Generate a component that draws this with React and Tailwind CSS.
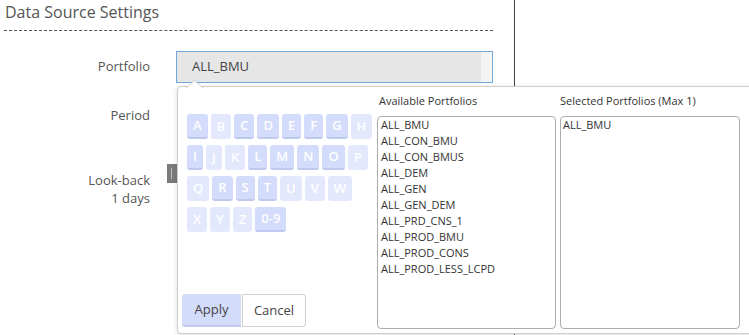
import React from "react";

const rows = [
  [["A", 1], ["B", 0], ["C", 1], ["D", 1], ["E", 1], ["F", 1], ["G", 1], ["H", 0]],
  [["I", 1], ["J", 0], ["K", 0], ["L", 1], ["M", 1], ["N", 1], ["O", 1], ["P", 0]],
  [["Q", 0], ["R", 1], ["S", 1], ["T", 1], ["U", 0], ["V", 0], ["W", 0]],
  [["X", 0], ["Y", 0], ["Z", 0], ["0-9", 1]],
];

const items = [
  "ALL_BMU",
  "ALL_CON_BMU",
  "ALL_CON_BMUS",
  "ALL_DEM",
  "ALL_GEN",
  "ALL_GEN_DEM",
  "ALL_PRD_CNS_1",
  "ALL_PROD_BMU",
  "ALL_PROD_CONS",
  "ALL_PROD_LESS_LCPD",
];

function Letter({ label, active }) {
  return (
    <div
      className={
        active
          ? "h-[25px] px-[6px] flex items-center justify-center rounded-[3px] bg-[#d4dcfb] border-b-2 border-[#bfc9f0] text-white text-[13px] font-semibold"
          : "h-[25px] px-[6px] flex items-center justify-center rounded-[3px] bg-[#e3e8fd] text-white text-[13px] font-semibold"
      }
    >
      {label}
    </div>
  );
}

export default function App() {
  return (
    <div
      className="relative w-[749px] h-[335px] overflow-hidden bg-white flex text-[#555]"
      style={{ fontFamily: '"Open Sans", "Liberation Sans", sans-serif' }}
    >
      <div className="w-[515px] h-full border-r border-[#444] shrink-0">
        <div className="pl-[5px] pt-[1px] text-[16px] leading-[22px] text-[#555]">
          Data Source Settings
        </div>
        <div className="ml-[4px] w-[489px] mt-[7px] border-t border-dashed border-[#555]" />
        <div className="mt-[20px] flex items-center h-[32px]">
          <div className="w-[150px] text-right text-[13px]">Portfolio</div>
          <div className="ml-[26px] w-[317px] h-[32px] border border-[#6fa8dc] bg-[#e6e6e6] flex">
            <div className="flex-1 pl-[15px] flex items-center text-[13px] text-[#444]">ALL_BMU</div>
            <div className="w-[11px] bg-[#f4f4f4]" />
          </div>
        </div>
        <div className="mt-[23px] flex h-[18px] items-center">
          <div className="w-[150px] text-right text-[13px] leading-[18px]">Period</div>
        </div>
        <div className="mt-[47px] flex items-start">
          <div className="w-[150px] text-right text-[13px] leading-[18px]">
            Look-back
            <br />1 days
          </div>
          <div className="ml-[17px] -mt-[7px] w-[10px] h-[19px] bg-[#7b7b7b] flex items-center pl-[4px]">
            <div className="w-px h-[11px] bg-[#bdbdbd]" />
          </div>
        </div>
      </div>

      <div className="absolute left-[177px] top-[86px] w-[590px] h-[248px] bg-white border border-[#cfcfcf] rounded-[4px] shadow-[0_1px_5px_rgba(0,0,0,0.15)] flex">
        <svg className="absolute left-[8px] top-[-7px]" width="17" height="8" viewBox="0 0 17 8">
          <path d="M0 8 L8.5 0.5 L17 8" fill="white" stroke="#cfcfcf" strokeWidth="1" />
        </svg>
        <div className="w-[199px] h-full flex flex-col justify-between pb-[6px]">
          <div className="pl-[9px] pt-[27px] flex flex-col gap-[6px]">
            {rows.map((r, i) => (
              <div key={i} className="flex gap-[3px]">
                {r.map(([l, a]) => (
                  <Letter key={l} label={l} active={a} />
                ))}
              </div>
            ))}
          </div>
          <div className="pl-[4px] flex">
            <div className="w-[59px] h-[33px] bg-[#d4dcfb] border-b-2 border-[#c3ccf0] rounded-l-[3px] flex items-center justify-center text-[13px] text-[#444]">
              Apply
            </div>
            <div className="ml-[1px] w-[64px] h-[33px] bg-white border border-[#cfcfcf] rounded-r-[3px] flex items-center justify-center text-[13px] text-[#444]">
              Cancel
            </div>
          </div>
        </div>
        <div className="flex gap-[4px] pt-[6px]">
          <div className="w-[179px] flex flex-col">
            <div className="text-[11px] leading-[16px] text-[#333] pl-[2px]">Available Portfolios</div>
            <div className="mt-[7px] h-[213px] border border-[#adadad] rounded-[4px] pl-[3px] text-[11px] leading-[16px] text-[#333]">
              {items.map((t) => (
                <div key={t}>{t}</div>
              ))}
            </div>
          </div>
          <div className="w-[180px] flex flex-col">
            <div className="text-[11px] leading-[16px] text-[#333]">Selected Portfolios (Max 1)</div>
            <div className="mt-[7px] h-[213px] border border-[#adadad] rounded-[4px] pl-[2px] text-[11px] leading-[16px] text-[#333]">
              <div>ALL_BMU</div>
            </div>
          </div>
        </div>
      </div>
    </div>
  );
}
